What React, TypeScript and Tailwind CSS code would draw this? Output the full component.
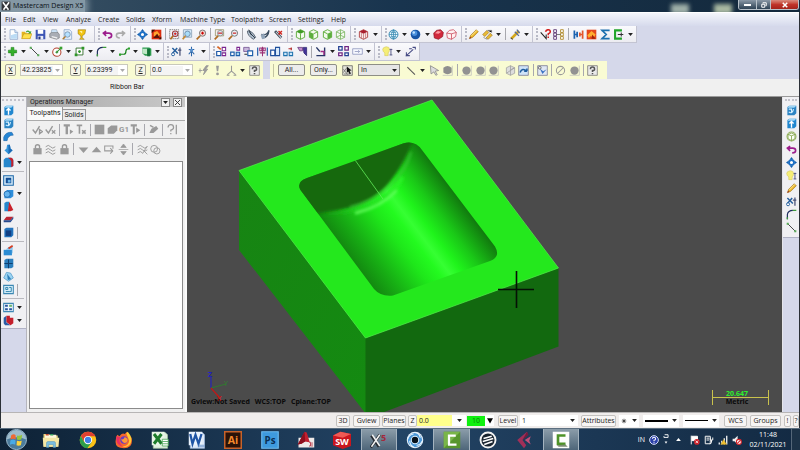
import type { ReactNode } from "react";

const icons: Record<string, ReactNode> = {
  file: <><path d="M3 1h7l4 4v10H3z" fill="#fff" stroke="#7d9cc4" /><path d="M4 9l9-3v8H4z" fill="#bcdcf5" /><path d="M10 1v4h4" fill="#dcebfa" stroke="#7d9cc4" /></>,
  open: <><path d="M1 14V4h5l1 2h7v8z" fill="#e3b51f" /><path d="M1 14l3-7h12l-3 7z" fill="#ffe14d" stroke="#b8860b" strokeWidth=".7" /><path d="M7 4q3-4 6 0l2-1-1 4-4-1 2-1q-2-2-4 0z" fill="#3aa335" /></>,
  save: <><path d="M1 1h13l1 1v13H1z" fill="#3d55b5" /><path d="M4 1h8v6H4z" fill="#fff" /><path d="M4 10h8v5H4z" fill="#e8ecf8" /><path d="M5 11h3v4H5z" fill="#26357c" /></>,
  print: <><path d="M4 1h7l2 6H3z" fill="#cfe6fa" stroke="#7a8ca0" strokeWidth=".7" /><path d="M1 7l3-2h9l2 3v5l-4 2-10-3z" fill="#a9adb5" stroke="#666" strokeWidth=".7" /><path d="M4 10l8 2v2l-8-2z" fill="#eee" /></>,
  preview: <><path d="M3 1h8l3 3v11H3z" fill="#e9f2fc" stroke="#7d9cc4" /><circle cx="8" cy="8" r="4" fill="#b5e0ff" stroke="#68829c" /><path d="M5 11l-4 4" stroke="#b07a2c" strokeWidth="2" /></>,
  cup: <><path d="M3 1h11l-1 6-4 3v3l3 2H5l2-2v-3L3 7z" fill="#f2c311" stroke="#8a6d00" strokeWidth=".7" /><path d="M5 3h4v4z" fill="#fff1a0" /></>,
  undo: <path d="M6 3L2 6l4 4M3 6h7q4 0 4 3.500T9 13" fill="none" stroke="#9b1c8c" strokeWidth="2.400" />,
  redo: <path d="M10 3l4 3-4 4M13 6H6q-4 0-4 3.500T7 13" fill="none" stroke="#aaa" strokeWidth="2.200" />,
  pan: <><path d="M8 0l3 4H5zM8 16l3-4H5zM0 8l4-3v6zM16 8l-4-3v6z" fill="#1560b0" /><circle cx="8" cy="8" r="3.500" fill="#fff" stroke="#1d70c5" strokeWidth="2.500" /></>,
  fit: <><path d="M1 1h14v14H1z" fill="#d92d0e" /><path d="M1 1h5L1 6zM15 11v4h-4z" fill="#3b1008" /><path d="M4 5l5-2 4 5-4 5-5-3z" fill="#ffa52e" /><path d="M3 13l6-6 4 6z" fill="#5b1408" /></>,
  zoomWin: <><path d="M1 1h13v13H1z" fill="none" stroke="#555" strokeDasharray="2 1" /><circle cx="9" cy="7" r="4" fill="#cfe9fb" stroke="#a03a3a" strokeWidth="1.500" /><path d="M9 5v4M7 7h4" stroke="#d11" strokeWidth="1.500" /><path d="M6 10l-4 5" stroke="#b06c22" strokeWidth="2.500" /></>,
  zoomFit: <><path d="M2 1h12v11H2z" fill="#d8ecfb" stroke="#7991aa" /><circle cx="8" cy="7" r="4" fill="#a8dcf8" stroke="#5a7390" /><path d="M5 10l-4 5" stroke="#c58b34" strokeWidth="2.500" /></>,
  zoomIn: <><circle cx="9.500" cy="6" r="4.500" fill="#f0d6d0" stroke="#666" strokeWidth="1.200" /><path d="M9.500 4v4M7.500 6h4" stroke="#c00" strokeWidth="1.500" /><path d="M6 10l-5 5" stroke="#b06c22" strokeWidth="2.500" /></>,
  zoomOut: <><circle cx="9.500" cy="6" r="4.500" fill="#e6f0f6" stroke="#666" strokeWidth="1.200" /><path d="M7 6h5" stroke="#c00" strokeWidth="1.500" /><path d="M6 10l-5 5" stroke="#b06c22" strokeWidth="2.500" /></>,
  zoomHalf: <><path d="M2 1h12v9H2z" fill="#f7eeee" stroke="#885" /><circle cx="9" cy="6" r="4" fill="#dce8ef" stroke="#777" /><path d="M6 6h6" stroke="#c00" strokeWidth="1.500" /><path d="M6 10l-5 5" stroke="#b06c22" strokeWidth="2.500" /></>,
  brush: <><path d="M2 3q6-2 12 9l-3 3Q2 10 2 3z" fill="#aebccc" stroke="#33404f" /><path d="M5 5l8 8M4 1l4 8" stroke="#222e3a" strokeWidth="1.300" /></>,
  brushUp: <><path d="M2 8q8 2 11-6M4 13q8-1 9-11" fill="none" stroke="#3b4c60" strokeWidth="2" /><path d="M1 9l5-3 2 7-5 2z" fill="#91a4b9" /></>,
  brushX: <><path d="M3 3l9 10" stroke="#33404f" strokeWidth="4" /><path d="M4 4l8 9" stroke="#d5dbe2" strokeWidth="1.500" /><path d="M8 3l5 5M13 3L8 8" stroke="#d1251f" strokeWidth="2" /></>,
  cubeTop: <><path d="M2 4l6-3 6 3v8l-6 3-6-3z" fill="#f3faee" stroke="#57a833" strokeWidth="1.300" /><path d="M2 4l6-3 6 3-6 3z" fill="#3f9a24" /><path d="M8 7v8" stroke="#57a833" strokeWidth="1.300" /></>,
  cubeLeft: <><path d="M2 4l6-3 6 3v8l-6 3-6-3z" fill="#f3faee" stroke="#57a833" strokeWidth="1.300" /><path d="M2 4l6 3v8l-6-3z" fill="#5cae3d" /><path d="M8 7l6-3" stroke="#57a833" strokeWidth="1.300" /></>,
  cubeRight: <><path d="M2 4l6-3 6 3v8l-6 3-6-3z" fill="#f3faee" stroke="#57a833" strokeWidth="1.300" /><path d="M14 4L8 7v8l6-3z" fill="#5cae3d" /><path d="M2 4l6 3" stroke="#57a833" strokeWidth="1.300" /></>,
  cubeIso: <path d="M2 4l6-3 6 3v8l-6 3-6-3zM2 4l6 3 6-3M8 7v8M2 12l6-3 6 3M8 1v8" fill="#f5faf1" stroke="#6eaf52" strokeWidth="1.100" />,
  table: <><path d="M2 4l6-3 6 3v8l-6 3-6-3z" fill="#f9e9e9" stroke="#a33" strokeWidth="1.200" /><path d="M2 4l6-3 6 3-6 3z" fill="#a91f2d" /><path d="M8 7v8M5 6v7M11 6v7" stroke="#b66" /></>,
  globe: <><circle cx="8" cy="8" r="6.500" fill="#eef8ff" stroke="#2e84ae" strokeWidth="1.300" /><path d="M1.500 8h13M8 1v14M3 4q5 3 10 0M3 12q5-3 10 0M8 1q-6 7 0 14M8 1q6 7 0 14" fill="none" stroke="#2e84ae" /></>,
  sphere: <><circle cx="8" cy="8" r="7" fill="#1754a5" /><circle cx="6.500" cy="6" r="4" fill="#4a90dc" /><circle cx="5.500" cy="5" r="1.800" fill="#bfe0ff" /></>,
  redBox: <><path d="M1 6l4-4 6-1 4 4-1 6-6 4-6-2z" fill="#d1293c" stroke="#8c1220" /><path d="M3 6l4-3 5 1-4 3z" fill="#ff9aa2" /></>,
  redWire: <path d="M1 6l4-4 6-1 4 4-1 6-6 4-6-2zM1 6l7 1 7-2M8 7v8" fill="#fff2f2" stroke="#c94456" strokeWidth="1.100" />,
  pencil: <><path d="M2 14l2-5 8-8 3 3-8 8z" fill="#eab529" stroke="#97660d" strokeWidth=".8" /><path d="M5 10l8-8" stroke="#fff0a0" strokeWidth="1.300" /><path d="M2 14l1-3 2 2z" fill="#932" /></>,
  pencils: <><path d="M1 8l6-6 3 3-6 6zM6 13l6-7 3 3-6 6z" fill="#e9bb36" stroke="#8c6514" strokeWidth=".8" /><path d="M8 2h6v3M2 12l5 3" stroke="#777" /></>,
  wand: <><path d="M2 14l11-11" stroke="#d6a91b" strokeWidth="4" /><path d="M7 4l6 6M10 1l4 5" stroke="#576b9f" strokeWidth="2" /><path d="M1 13l3 2" stroke="#444" strokeWidth="1.500" /></>,
  ask: <><path d="M1 5l8 9V8" fill="none" stroke="#222" strokeWidth="1.500" /><path d="M8 4q1-3 4-3t3 3q0 2-3 3v2M12 11v2" fill="none" stroke="#d22020" strokeWidth="2.200" /></>,
  grid6: <><path d="M1 1h4v4H1zM1 6h4v4H1zM1 11h4v4H1z" fill="#fff" stroke="#5b3674" strokeWidth="1.300" /><path d="M11 1h4v4h-4zM11 6h4v4h-4zM11 11h4v4h-4z" fill="#fff" stroke="#b08a2a" strokeWidth="1.300" /><path d="M5 8h6" stroke="#444" /></>,
  join: <><path d="M2 2v12M2 8h5M6 4v8" stroke="#1d63b0" strokeWidth="2.500" /><path d="M14 2v12M9 8h5M10 5v6" stroke="#e4572c" strokeWidth="2.500" /></>,
  flame: <><path d="M1 1h14v14H1z" fill="#e4461b" /><path d="M2 9l6-6 6 5-3 5-4-3-3 3z" fill="#ffae2e" /><path d="M9 8l5 6H8z" fill="#a32008" /></>,
  sigma: <path d="M14 2H3l6 6-6 6h11M2 2h12M2 14h12" fill="none" stroke="#1b6fae" strokeWidth="2.500" />,
  loop: <><path d="M13 2H3v12h10" fill="none" stroke="#21a52a" strokeWidth="3" /><path d="M7 8h8M12 5v6" stroke="#333" strokeWidth="1.500" /></>,
  plus: <path d="M6 2h4v4h4v4h-4v4H6v-4H2V6h4z" fill="#35b02a" stroke="#147a12" strokeWidth=".8" />,
  line: <><path d="M2 2l12 12" stroke="#333" strokeWidth="1.300" /><path d="M1 1h3v3H1zM12 12h3v3h-3z" fill="#57a957" /></>,
  circle: <><circle cx="7" cy="9" r="6" fill="#fff" stroke="#b54332" strokeWidth="1.500" /><path d="M7 9l5-5M5 9h4M7 7v4" stroke="#2c8d2c" strokeWidth="1.500" /><path d="M11 1h4v4h-4z" fill="#38a12e" /></>,
  rect: <><path d="M3 3h10v10H3z" fill="#fff" stroke="#2f6b2a" strokeWidth="1.300" /><path d="M1 11h4v4H1zM11 1h4v4h-4zM6 7h4v2H6zM7 6h2v4H7z" fill="#2e9628" /></>,
  fillet: <><path d="M2 15V8q1-6 8-6" fill="none" stroke="#1e2c5c" strokeWidth="1.700" /><path d="M10 2h5M2 15v-3" stroke="#3d9c3a" strokeWidth="2" /></>,
  spline: <><path d="M2 12h5q3 0 3-4t4-4" fill="none" stroke="#18841c" strokeWidth="1.800" /><path d="M0 11h3v3H0zM13 2h3v3h-3z" fill="#2aa32a" /></>,
  drum: <><path d="M2 2h10l3 2v10H6l-4-3z" fill="#2f9c50" /><path d="M2 4h7v8l-7-1z" fill="#bfe8c6" /><path d="M9 4h4v11H9z" fill="#137136" /></>,
  trim: <><path d="M2 3l8 8M2 11l7-8" stroke="#27609e" strokeWidth="2.200" /><circle cx="3" cy="12" r="2.200" fill="#fff" stroke="#27609e" strokeWidth="1.400" /><path d="M13 2v12M10 6h5" stroke="#474f75" strokeWidth="1.800" /></>,
  axis: <><path d="M8 1v14M4 5h8M4 12l4-5 4 5" fill="none" stroke="#2a64a8" strokeWidth="1.500" /><circle cx="8" cy="6" r="2.200" fill="#5b93cf" /></>,
  xfMove: <><path d="M1 8h6v6H1z" fill="#fff" stroke="#2159a8" strokeWidth="1.700" /><path d="M9 2h5v5H9zM9 10h5v4H9z" fill="#fff" stroke="#7b2590" strokeWidth="1.500" /><path d="M2 1l5 4" stroke="#d66322" strokeWidth="2.500" /></>,
  xfRotate: <><path d="M1 9h5v5H1z" fill="#fff" stroke="#1f5faa" strokeWidth="1.700" /><path d="M9 9h5v5H9z" fill="#a7d4ee" stroke="#1f5faa" strokeWidth="1.500" /><path d="M10 2h4v4h-4z" fill="#fff" stroke="#7b2590" strokeWidth="1.500" /></>,
  xfCopy: <><path d="M1 2h8v6H1z" fill="#c8b6dc" stroke="#634086" /><path d="M7 7h7v7H7z" fill="#fff" stroke="#1f5faa" strokeWidth="1.700" /><path d="M2 12h4" stroke="#333" strokeWidth="1.500" /></>,
  xfMirror: <><path d="M1 2v12M15 2v12" stroke="#2159a8" strokeWidth="1.700" /><path d="M4 3h3v4H4zM4 10h8M9 3h3v4H9zM8 1v14" fill="none" stroke="#9a2f75" strokeWidth="1.500" /></>,
  xfScale: <><path d="M1 6h6v8H1z" fill="#fff" stroke="#1f4f9c" strokeWidth="1.700" /><path d="M8 2h6v12H8z" fill="#d9eafa" stroke="#1f4f9c" strokeWidth="1.500" /></>,
  xfOffset: <><path d="M1 9h5v5H1zM9 9h5v5H9z" fill="#cfe8fa" stroke="#1e72ad" strokeWidth="1.500" /><path d="M8 4h5M12 2v4" stroke="#b22a2a" strokeWidth="1.700" /></>,
  xfProject: <><path d="M1 2h7v5H4z" fill="#c08bcd" stroke="#55246e" /><path d="M9 2h5v12l-4-4z" fill="#44339a" stroke="#251b68" /></>,
  nest: <><path d="M2 2l5 6M2 14h12V2" fill="none" stroke="#273565" strokeWidth="2" /><path d="M8 8h5v5" fill="none" stroke="#a32f86" strokeWidth="2" /></>,
  quad: <><path d="M1 1h5v5H1zM10 10h5v4h-5z" fill="#fff" stroke="#233f93" strokeWidth="1.800" /><path d="M10 1h5v5h-5zM1 10h5v4H1z" fill="#fff" stroke="#6f2682" strokeWidth="1.800" /></>,
  dragBox: <path d="M1 4h14v8H1zM4 8h7M9 6l2 2-2 2" fill="#f7f8ff" stroke="#8790b9" strokeWidth="1.100" />,
  bulb: <><path d="M6 1q5 0 5 4 0 3-2 5v4H4v-4Q1 8 1 5t5-4z" fill="#f5ee77" stroke="#d3c65a" strokeWidth=".8" /><path d="M13 4v9M11 5h4M11 13h4" stroke="#555a86" strokeWidth="1.400" /></>,
  dim: <><path d="M1 14h6M2 9v5l10-9M6 4h4M11 2h4v3" fill="none" stroke="#454a83" strokeWidth="1.500" /></>,
  flash: <path d="M1 8h5M3 5v6M12 1L7 8h3l-2 6 6-8h-3l4-5z" fill="#9a9a9a" stroke="#9a9a9a" strokeWidth="1.300" />,
  bang: <><path d="M6 1h4L9 9H7z" fill="#999" /><circle cx="8" cy="13" r="2" fill="#999" /></>,
  tripod: <path d="M8 1v8M8 9l-6 5M8 9l6 5M1 15h4M11 15h4" fill="none" stroke="#999" strokeWidth="1.500" />,
  help: <><path d="M1 1h14v14H1z" fill="#eaeaea" stroke="#666" /><path d="M5 6q0-3 3-3t3 3q0 2-3 2v2M8 11.500v2" fill="none" stroke="#555" strokeWidth="2.200" /></>,
  pick: <><path d="M1 1h14v14H1z" fill="#e4e4da" stroke="#555" /><path d="M7 2l7 6-3 .5 2 4-2 1-2-4-2 2z" fill="#111" /><path d="M2 6l6 8M2 11l5-7M3 13h8" stroke="#666" /></>,
  seg: <path d="M2 3l11 11" stroke="#555" strokeWidth="1.500" />,
  pointer: <path d="M2 1l12 7-5 1 3 5-2 1-3-5-4 3z" fill="#ddd" stroke="#8b8b8b" strokeWidth="1.200" />,
  blob: <><path d="M15 1v14H1" fill="none" stroke="#bbb" /><path d="M2 4q6-5 12 0v7q-6 5-12 0z" fill="#8e8e8e" /></>,
  ball: <><path d="M15 1v14H1" fill="none" stroke="#bbb" /><circle cx="8" cy="8" r="6" fill="#929292" /></>,
  halfCube: <><path d="M2 4l6-3 6 3v8l-6 3-6-3z" fill="#ddd" stroke="#999" /><path d="M8 1v14M8 7l6-3M2 12L14 4" stroke="#999" /></>,
  swoop: <><path d="M1 1h14v14H1z" fill="#cfe3f8" stroke="#668" /><path d="M3 11q3-8 10-2M13 9V5M13 9H9" fill="none" stroke="#1f5d9e" strokeWidth="2.200" /></>,
  verify: <><path d="M1 1h14v14H1z" fill="#dfe7f4" stroke="#668" /><path d="M4 5l4 8 6-7-5 3z" fill="#3c74c4" /><circle cx="4" cy="4" r="2" fill="#eee" stroke="#444" /></>,
  ban: <><circle cx="8" cy="8" r="6" fill="none" stroke="#9a9a9a" strokeWidth="1.500" /><path d="M4 12l8-8" stroke="#9a9a9a" strokeWidth="1.500" /></>,
  check: <path d="M1 8l4 5 6-10M11 8v6l4-3z" fill="none" stroke="#999" strokeWidth="2" />,
  checkX: <path d="M1 8l4 5 6-10M10 9l5 5M15 9l-5 5" fill="none" stroke="#999" strokeWidth="2" />,
  regen: <><path d="M1 2h9M5.500 2v13" stroke="#999" strokeWidth="3.500" /><path d="M10 8l5 3-5 4z" fill="#999" /></>,
  regenX: <path d="M1 2h8M5 2v12M9 9l5 5M14 9l-5 5" fill="none" stroke="#999" strokeWidth="2.300" />,
  square: <path d="M1 1h14v14H1z" fill="#999" />,
  stock: <path d="M1 6l5-4h9v7l-5 5H1z" fill="#999" />,
  post: <><path d="M1 2h9M5.500 2v13" stroke="#999" strokeWidth="3" /><path d="M9 5l6 4-6 4z" fill="#999" /></>,
  feed: <><path d="M2 13l3-6 7-4 3 4-7 6z" fill="#999" /><path d="M3 2l5 3" stroke="#999" strokeWidth="2" /></>,
  qmark: <path d="M3 5q0-4 4-4t4 4q0 3-4 4v2M7 13v2M15 1v14" fill="none" stroke="#999" strokeWidth="1.800" />,
  lock: <><path d="M2 6h12v9H2z" fill="#999" /><path d="M5 7V4q0-3 3-3t3 3v3" fill="none" stroke="#999" strokeWidth="2" /></>,
  waves: <path d="M1 4q4-4 7 0t7 0M1 8.500q4-4 7 0t7 0M1 13q4-4 7 0t7 0" fill="none" stroke="#999" strokeWidth="1.400" />,
  down: <path d="M1 5h14l-7 8z" fill="#999" />,
  up: <path d="M1 12h14L8 4z" fill="#999" />,
  enter: <path d="M1 2v8h12M13 10l-4-4M13 10l-4 4M1 3h12v4" fill="none" stroke="#999" strokeWidth="1.500" />,
  updown: <path d="M8 0l4 5H4zM8 16l4-5H4zM1 8h14" fill="#999" stroke="#999" />,
  rings: <><circle cx="6" cy="7" r="5" fill="none" stroke="#999" strokeWidth="1.300" /><circle cx="10" cy="10" r="4.500" fill="none" stroke="#999" strokeWidth="1.300" /></>,
  wavesX: <path d="M1 4q4-4 7 0t7 0M1 8.500q4-4 7 0t7 0M1 13q4-4 7 0M10 10l5 5M15 3l-7 11" fill="none" stroke="#999" strokeWidth="1.300" />,
  extrude: <><path d="M2 3l3-2h10v11l-3 3H2z" fill="#2187cf" /><path d="M5 1h10l-3 3H2z" fill="#9fd5f5" /><path d="M8 5v9M5 8l3-3 3 3" fill="none" stroke="#fff" strokeWidth="2" /></>,
  revolve: <><path d="M2 3l3-2h10v11l-3 3H2z" fill="#2b84c4" /><path d="M5 1h10l-3 3H2z" fill="#9fd5f5" /><path d="M4 10q5 4 7-4M4 6h4v5" fill="none" stroke="#d4efff" strokeWidth="1.600" /></>,
  sweep: <path d="M1 14V9q3-8 12-7l2 4q-8 0-9 8z" fill="#2585d5" stroke="#12599e" strokeWidth=".7" />,
  loft: <><path d="M6 1h4l1 6 3 2-6 6-6-6 3-2z" fill="#3596dc" /><path d="M8 1h2l1 6 3 2-6 6z" fill="#1a69b4" /></>,
  filletSolid: <><path d="M1 4l3-3h8l3 3v9l-3 2H1z" fill="#2687cd" /><path d="M7 1h5q3 1 3 4v8l-3 2V6q-1-3-5-5z" fill="#c5202b" /></>,
  shell: <><path d="M1 1h14v14H1z" fill="#d2e9f9" stroke="#1d67a8" strokeWidth="1.500" /><path d="M4 4h8v8H4z" fill="#134c94" /><path d="M7 7h4v4H7z" fill="#6fb9ec" /></>,
  bool: <><path d="M2 6l4-3h9v9l-4 3H2z" fill="#2d8ddb" /><circle cx="6" cy="9" r="4.500" fill="#65b4ef" stroke="#155b9c" /></>,
  draft: <><path d="M2 15V3l3-2h4l-1 14z" fill="#2687cd" /><path d="M9 1l6 12-4 2H7z" fill="#c9202b" /></>,
  plate: <><path d="M1 9l4-5h10l-4 5z" fill="#bb2633" /><path d="M1 9h10l4-5v3l-4 5H1z" fill="#254a90" /></>,
  solid: <><path d="M2 3l3-2h10v11l-3 3H2z" fill="#2273bd" /><path d="M4 5h8v8H4z" fill="#123f83" /></>,
  trimSolid: <><path d="M1 7h12v8H1z" fill="#2b8cd4" /><path d="M4 7l4-4h6v8l-1 2V7z" fill="#81c2ee" /><path d="M8 5l6-4" stroke="#d43b1f" strokeWidth="2.500" /></>,
  windows: <><path d="M2 3l3-2h10v12l-3 2H2z" fill="#2b7ebd" /><path d="M2 8h12M8 2v13" stroke="#0f3f70" strokeWidth="1.500" /></>,
  crystal: <><path d="M5 2l6 1 4 7-7 5-7-5z" fill="#9bd3f2" stroke="#4995c4" /><path d="M6 4l6 8-5 1z" fill="#2c7eb9" /></>,
  sheet: <><path d="M1 2h14v12H1z" fill="#d5edf8" stroke="#3d88b3" strokeWidth="1.500" /><path d="M4 5h3v3H4zM9 5h3v6H9M4 11h5" fill="none" stroke="#257da9" strokeWidth="1.300" /></>,
  layout: <><path d="M1 2h14v12H1z" fill="#eef7fe" stroke="#3f87b4" strokeWidth="1.500" /><path d="M3 4h4v3H3zM3 9h4v3H3zM9 9h4v3H9z" fill="#28539e" /><path d="M9 4h4v3H9z" fill="#6cb46b" /></>,
  cutter: <><path d="M1 4l4-3v10l6 4H3l-2-3z" fill="#2c5da6" /><path d="M5 1h5v3h5v8l-4 3-6-5z" fill="#c41f2c" /></>,
  wheel: <><circle cx="8" cy="8" r="6.500" fill="#fbfff5" stroke="#8fae58" strokeWidth="1.500" /><path d="M3 5l5-2 5 2-5 2zM8 7v7M3 5v6l5 3 5-3V5" fill="none" stroke="#83a44e" strokeWidth="1.200" /></>,
};

function Tool({ name }: { name: string }) {
  return (
    <button type="button" aria-label={name} className="flex h-[13px] w-[13px] shrink-0 items-center justify-center">
      <svg viewBox="0 0 16 16" className="h-[11px] w-[11px]">{icons[name]}</svg>
    </button>
  );
}

function Caret() {
  return (
    <svg viewBox="0 0 8 5" aria-hidden="true" className="h-[3px] w-[5px] shrink-0">
      <path d="M0 0h8L4 5z" fill="#222" />
    </svg>
  );
}

// "v" is a drop-down arrow, "|" a divider, anything else an icon name
function Tools({ items }: { items: string }) {
  return items.split(" ").map((item, i) => {
    if (item === "v") return <span key={i} className="flex w-[9px] justify-center"><Caret /></span>;
    if (item === "|") return <span key={i} className="mx-[2px] h-[12px] w-px shrink-0 bg-[#a8a8ae]" />;
    return <Tool key={i} name={item} />;
  });
}

function Group({ items, className }: { items: string; className: string }) {
  return (
    <div className={`flex items-center justify-between border-r border-b border-[#c3c4d2] bg-linear-to-b from-[#fafafd] to-[#ececf1] pl-[3px] ${className}`}>
      <span className="h-[12px] border-l-2 border-dotted border-[#b9bac6]" />
      <Tools items={items} />
    </div>
  );
}

const menus = [
  ["File", "w-[18px]"], ["Edit", "w-[20px]"], ["View", "w-[23px]"], ["Analyze", "w-[32px]"],
  ["Create", "w-[28px]"], ["Solids", "w-[26px]"], ["Xform", "w-[28px]"], ["Machine Type", "w-[51px]"],
  ["Toolpaths", "w-[38px]"], ["Screen", "w-[29px]"], ["Settings", "w-[33px]"], ["Help", "w-[20px]"],
];

function TitleBar() {
  return (
    <header className="relative flex h-[12px] items-center overflow-hidden bg-linear-to-r from-[#3a5264] via-[#18344e] to-[#14293c]">
      <span className="absolute top-[4px] right-[111px] h-[10px] w-[18px] bg-[#9fb0a8] blur-[2px]" />
      <span className="absolute top-[4px] right-[68px] h-[10px] w-[18px] bg-[#a9b9a2] blur-[2px]" />
      <div className="flex h-full items-center gap-[2px] bg-[#8498a5] pr-[2px] pl-px shadow-[0_0_6px_3px_#7d909d]">
        <svg viewBox="0 0 16 16" className="h-[10px] w-[10px]">
          <path d="M1 1h14v14H1z" fill="#33363a" />
          <path d="M3 2l9 12M13 2L4 14" stroke="#fff" strokeWidth="2.500" />
        </svg>
        <h1 className="text-[7px] leading-[12px] whitespace-nowrap text-[#0a0f14]">Mastercam Design X5</h1>
      </div>
      <div className="relative mr-px ml-auto flex h-[10px] self-start overflow-hidden rounded-b-[3px] border border-t-0 border-[#b9c2ca]">
        <button type="button" aria-label="Minimize" className="flex w-[18px] items-center justify-center border-r border-[#b9c2ca] bg-linear-to-b from-[#8a98a6] to-[#2f4355]">
          <span className="h-[2px] w-[7px] bg-white" />
        </button>
        <button type="button" aria-label="Restore" className="flex w-[14px] items-center justify-center border-r border-[#b9c2ca] bg-linear-to-b from-[#8a98a6] to-[#2f4355]">
          <svg viewBox="0 0 8 8" className="h-[6px] w-[6px]"><path d="M2.500 2V1H7v4H6M1 3h4v4H1z" fill="none" stroke="#fff" strokeWidth="1.300" /></svg>
        </button>
        <button type="button" aria-label="Close" className="flex w-[27px] items-center justify-center bg-linear-to-b from-[#d88a7e] via-[#c0342a] to-[#a3231b]">
          <svg viewBox="0 0 8 8" className="h-[6px] w-[6px]"><path d="M1 1l6 6M7 1L1 7" stroke="#fff" strokeWidth="2" /></svg>
        </button>
      </div>
    </header>
  );
}

function Coord({ axis, value, className }: { axis: string; value: string; className: string }) {
  return (
    <div className={`flex items-center justify-between ${className}`}>
      <button type="button" className="h-[12px] w-[11px] rounded-[2px] border border-[#a5a598] bg-[#f5f5e8] text-[7px] leading-[9px] underline">{axis}</button>
      <div className="flex h-[12px] w-[43px] items-center border border-[#c9c9bb] bg-white pr-[2px]">
        <input aria-label={axis} defaultValue={value} className="w-full min-w-0 bg-[#f4f4f4] pl-px text-[7px] leading-[9px] outline-none" />
        <svg viewBox="0 0 8 5" className="ml-[2px] h-[3px] w-[5px] shrink-0"><path d="M0 0h8L4 5z" fill="#aaa" /></svg>
      </div>
    </div>
  );
}

function YellowBar() {
  return (
    <div className="flex h-[18px] font-['Roboto','Liberation_Sans',sans-serif]">
      <div className="flex w-[262px] items-center bg-[#f9fbd3] pl-[4px]">
        <Coord axis="X" value="42.23825" className="mr-[7px] w-[58px]" />
        <Coord axis="Y" value="6.23399" className="mr-[7px] w-[58px]" />
        <Coord axis="Z" value="0.0" className="mr-[4px] w-[58px]" />
        <div className="flex w-[64px] items-center justify-between">
          <Tools items="flash bang tripod v help" />
        </div>
      </div>
      <div className="ml-[7px] flex w-[337px] items-center bg-[#f9fbd3] pl-[3px]">
        <span className="mr-[4px] h-[13px] w-px bg-[#c4c5a2]" />
        <button type="button" className="mr-[5px] h-[12px] w-[27px] rounded-[2px] border border-[#8e8e86] bg-[#ececec] text-[7px] leading-[9px]">All...</button>
        <button type="button" className="mr-[4px] h-[12px] w-[27px] rounded-[2px] border border-[#8e8e86] bg-[#ececec] text-[7px] leading-[9px]">Only...</button>
        <Tool name="pick" />
        <div className="relative ml-[4px] flex items-center">
          <select aria-label="Selection mode" className="h-[12px] w-[42px] appearance-none border border-[#8e8e86] bg-[#e6e6e6] pl-[2px] text-[7px] leading-[9px]">
            <option>In</option>
            <option>Out</option>
          </select>
          <span className="pointer-events-none absolute right-[3px]"><Caret /></span>
        </div>
        <div className="ml-[5px] flex w-[95px] items-center justify-between">
          <Tools items="seg v pointer blob | ball ball ball" />
        </div>
        <div className="ml-[4px] flex w-[95px] items-center justify-between">
          <Tools items="halfCube swoop | verify | ban ball | help" />
        </div>
      </div>
    </div>
  );
}

function LeftDock() {
  const rows = ["extrude", "revolve", "sweep", "loft", "filletSolid v", "-", "shell", "bool v", "draft", "plate", "solid |", "-", "trimSolid", "windows", "crystal", "sheet |", "-", "layout v", "cutter v"];
  return (
    <aside className="w-[26px] shrink-0 border-r border-[#b5b5bd] bg-[#d5d8ea]">
      <div className="border-b border-[#b0b2c5] bg-[#f0f0f3] pt-[2px] pb-px pl-px">
        <div className="mr-[2px] mb-[3px] border-t-2 border-dotted border-[#c2c2ca]" />
        {rows.map((row, i) =>
          row === "-" ? (
            <div key={i} className="my-[2px] mr-[2px] border-t border-[#b9b9bf]" />
          ) : (
            <div key={i} className="flex items-center"><Tools items={row} /></div>
          )
        )}
      </div>
    </aside>
  );
}

function RightDock() {
  const rows = ["revolve", "extrude", "wheel", "undo", "pan", "bulb", "pencil", "trim", "fillet", "line"];
  return (
    <aside className="w-[17px] shrink-0 border-l border-[#e5e5ea] bg-[#d5d8ea]">
      <div className="border-b border-[#b0b2c5] bg-[#f0f0f3] pt-[2px] pb-[3px] pl-[2px]">
        <div className="mr-[2px] mb-[3px] border-t-2 border-dotted border-[#c2c2ca]" />
        {rows.map((row) => <Tool key={row} name={row} />)}
      </div>
    </aside>
  );
}

function OperationsManager() {
  return (
    <section className="flex w-[160px] shrink-0 flex-col border-r-2 border-[#fafafa] bg-[#f0f0f0] font-['Roboto','Liberation_Sans',sans-serif]">
      <div className="flex h-[10px] items-center bg-linear-to-r from-[#a9a9a9] to-[#c9c9c9] pl-[3px]">
        <h2 className="text-[7px] leading-[10px] whitespace-nowrap text-[#222]">Operations Manager</h2>
        <button type="button" aria-label="Panel menu" className="mr-[3px] ml-auto flex h-[9px] w-[9px] items-center justify-center border border-[#888] bg-[#f2f2f2]"><Caret /></button>
        <button type="button" aria-label="Close panel" className="mr-[3px] flex h-[9px] w-[9px] items-center justify-center border border-[#888] bg-[#f2f2f2]">
          <svg viewBox="0 0 8 8" className="h-[5px] w-[5px]"><path d="M0 0l8 8M8 0L0 8" stroke="#333" strokeWidth="1.500" /></svg>
        </button>
      </div>
      <div className="flex h-[14px] items-end border-b border-[#ababab] pt-px pl-px">
        <button type="button" className="h-[13px] w-[35px] border-r border-[#999] bg-[#fafafa] text-[7px] leading-[11px]">Toolpaths</button>
        <button type="button" className="h-[11px] w-[23px] border-t border-r border-[#999] bg-[#ebebeb] text-[7px] leading-[10px]">Solids</button>
      </div>
      <div className="flex h-[18px] items-center justify-between border-b border-[#b3b3b3] pr-[7px] pl-[4px]">
        <Tools items="check checkX | regen regenX | square stock" />
        <button type="button" className="w-[13px] text-[8px] leading-[10px] font-bold text-[#999]">G1</button>
        <Tools items="post | feed | qmark" />
      </div>
      <div className="flex h-[20px] w-[135px] items-center justify-between pl-[4px]">
        <Tools items="lock waves lock | down up enter updown | wavesX rings" />
      </div>
      <div className="mx-[2px] mt-[2px] mb-[3px] flex-1 border border-[#8b8b8b] bg-white" />
    </section>
  );
}

function Viewport() {
  return (
    <main className="relative min-w-0 flex-1 overflow-hidden bg-[#4b4b4b]">
      <svg viewBox="187 97 595 315" preserveAspectRatio="xMidYMid slice" className="absolute inset-0 h-full w-full">
        <defs>
          <linearGradient id="bore" gradientUnits="userSpaceOnUse" x1="337" y1="239" x2="434" y2="166">
            <stop offset="0" stopColor="#138a10" />
            <stop offset=".15" stopColor="#17ad14" />
            <stop offset=".38" stopColor="#1ee71a" />
            <stop offset=".5" stopColor="#23fa1f" />
            <stop offset=".57" stopColor="#36ff33" />
            <stop offset=".66" stopColor="#1ff41b" />
            <stop offset=".8" stopColor="#1ac817" />
            <stop offset="1" stopColor="#117a0e" />
          </linearGradient>
          <linearGradient id="side" x1="0" y1="0" x2="1" y2="1">
            <stop offset="0" stopColor="#178413" />
            <stop offset="1" stopColor="#148a11" />
          </linearGradient>
          <linearGradient id="rim" gradientUnits="userSpaceOnUse" x1="318" y1="216" x2="398" y2="190">
            <stop offset="0" stopColor="#169512" stopOpacity="0" />
            <stop offset=".5" stopColor="#22d91e" />
            <stop offset="1" stopColor="#2bf227" />
          </linearGradient>
          <clipPath id="pocket">
            <path d="M307 178L403 143.500Q415 140 422 150L495 246.500Q501 257 490 261L393 295.500Q381 297 374 289L300.500 190Q296 182 307 178z" />
          </clipPath>
          <filter id="soft" x="-20%" y="-20%" width="140%" height="140%"><feGaussianBlur stdDeviation="1.800" /></filter>
        </defs>
        <path d="M239 170.500L366 338v76L239 250z" fill="url(#side)" />
        <path d="M365.500 338L558.500 268v78.500L365.500 419z" fill="#12690f" />
        <path d="M239 170.500L432 100l126.500 168-193 70z" fill="#24e81d" />
        <path d="M239 170.500L432 100l126.500 168" fill="none" stroke="#5bf553" strokeWidth=".6" />
        <path d="M239 170.500l126.500 167.500 193-70" fill="none" stroke="#4df545" strokeWidth=".7" />
        <g clipPath="url(#pocket)">
          <path d="M290 130h220v175H290z" fill="url(#bore)" />
          <path d="M290 216Q325 214 350 207.500T390 182 414 138L290 120z" fill="#12690f" filter="url(#soft)" />
          <path d="M322 214Q350 213 372 204T402 177" fill="none" stroke="url(#rim)" strokeWidth="4" filter="url(#soft)" />
          <path d="M350 207Q374 201 390 186T411 152" fill="none" stroke="#3fc43b" strokeWidth="1.500" filter="url(#soft)" />
          <path d="M356 213Q381 207 396 191" fill="none" stroke="#66ff60" strokeWidth="2.500" strokeLinecap="round" filter="url(#soft)" />
          <path d="M355 160l28 39" stroke="#63ec5b" strokeWidth=".8" />
        </g>
        <path d="M498 289.500h36M516.500 271v37" stroke="#061006" strokeWidth="1.600" />
        <path d="M211 388v-11" stroke="#2525b5" strokeWidth="1.200" />
        <path d="M211 388l15-4" stroke="#2f7a2f" />
        <path d="M211 388l8 9" stroke="#c01818" strokeWidth="1.200" />
        <g fontSize="7">
          <text x="208" y="377" fill="#2020c0" fontWeight="bold">Z</text>
          <text x="224" y="386" fill="#2d862d">Y</text>
          <text x="217" y="401" fill="#d01414" fontWeight="bold">X</text>
        </g>
      </svg>
      <p className="absolute bottom-[5px] left-[4px] flex gap-[5px] text-[7px] leading-[10px] font-bold whitespace-nowrap text-[#0a0a0a]">
        <span>Gview:Not Saved</span>
        <span>WCS:TOP</span>
        <span>Cplane:TOP</span>
      </p>
      <div className="absolute right-[13px] bottom-[7px] w-[57px] border-x border-[#c9c24c] pr-[7px] text-center text-[7px] leading-[7px] font-bold">
        <p className="text-[#2df02d]">20.647</p>
        <p className="-mr-[7px] border-t border-[#c9c24c] pr-[7px] text-[#0a0a0a]">Metric</p>
      </div>
    </main>
  );
}

const cell = "h-[12px] shrink-0 rounded-[2px] border border-[#c3c1bf] bg-[#f7f5f4] text-center text-[7px] leading-[10px] whitespace-nowrap";

function LineStyle({ weight, label }: { weight: string; label: string }) {
  return (
    <button type="button" aria-label={label} className="flex h-[12px] w-[36px] shrink-0 items-center justify-between bg-white px-[2px]">
      <span className={`w-[23px] border-black ${weight}`} />
      <Caret />
    </button>
  );
}

function StatusBar() {
  return (
    <footer className="flex h-[16px] items-center justify-end overflow-hidden border-t border-[#b7b5b5] bg-[#f0edec] text-[#222]">
      <button type="button" className={`${cell} mr-[3px] w-[14px]`}>3D</button>
      <button type="button" className={`${cell} mr-[2px] w-[27px]`}>Gview</button>
      <button type="button" className={`${cell} mr-[2px] w-[24px]`}>Planes</button>
      <button type="button" className={`${cell} w-[9px]`}>Z</button>
      <input aria-label="Z depth" defaultValue="0.0" className="h-[11px] w-[35px] shrink-0 bg-[#ffff8c] pl-[2px] text-[7px] leading-[10px] outline-none" />
      <span className="flex h-[11px] w-[14px] shrink-0 items-center justify-center bg-white"><Caret /></span>
      <button type="button" className="ml-px h-[10px] w-[18px] shrink-0 bg-[#10f010] text-[7px] leading-[10px] text-[#0a7a0a]">10</button>
      <span className="mr-[4px] flex h-[11px] w-[9px] shrink-0 items-center justify-center bg-white">
        <svg viewBox="0 0 8 8" className="h-[7px] w-[6px]"><path d="M0 1h8L4 8z" /></svg>
      </span>
      <button type="button" className={`${cell} mr-[2px] w-[20px]`}>Level</button>
      <input aria-label="Level" defaultValue="1" className="h-[11px] w-[46px] shrink-0 bg-white pl-[2px] text-[7px] leading-[10px] outline-none" />
      <span className="mr-[3px] flex h-[11px] w-[12px] shrink-0 items-center justify-center bg-white"><Caret /></span>
      <button type="button" className={`${cell} mr-[3px] w-[35px]`}>Attributes</button>
      <button type="button" aria-label="Point style" className="mr-[4px] flex h-[12px] w-[20px] shrink-0 items-center justify-between bg-white px-[2px]">
        <svg viewBox="0 0 8 8" className="h-[6px] w-[6px]"><path d="M4 1v6M1 4h6M2 2l4 4M6 2L2 6" stroke="#333" /></svg>
        <Caret />
      </button>
      <LineStyle weight="border-t-2" label="Line style" />
      <span className="w-[4px] shrink-0" />
      <LineStyle weight="border-t" label="Line width" />
      <button type="button" className={`${cell} ml-[5px] w-[23px]`}>WCS</button>
      <button type="button" className={`${cell} ml-[3px] w-[31px]`}>Groups</button>
      <button type="button" aria-label="Alerts" className={`${cell} ml-[3px] w-[7px]`}>!</button>
      <button type="button" aria-label="Help" className={`${cell} ml-[2px] w-[6px]`}>?</button>
    </footer>
  );
}

const apps: [string, boolean, ReactNode][] = [
  ["Explorer", false, <><path d="M2 4h7l2 2h10v15H2z" fill="#e8d27d" /><path d="M4 5h15v5H4z" fill="#fff8dc" /><path d="M5 4h4v2H5z" fill="#c34b32" /><path d="M11 4h4v2h-4z" fill="#37a15c" /><path d="M1 9h22l-1 12H2z" fill="#f5e7a5" /><path d="M6 22v-6q0-2 2-2h8q2 0 2 2v6h-3v-4H9v4z" fill="#79bde0" stroke="#4b8fb5" strokeWidth=".6" /></>],
  ["Chrome", false, <><circle cx="12" cy="12" r="11" fill="#fbc116" /><path d="M2.500 6.500A11 11 0 0122 7H12l-5 8z" fill="#df4032" /><path d="M2.500 6.500A11 11 0 0011 23l6-8H7z" fill="#2c9f4b" /><circle cx="12" cy="12" r="5.500" fill="#fff" /><circle cx="12" cy="12" r="4.200" fill="#3f7fe8" /></>],
  ["Firefox", false, <><path d="M3 5l3 2q3-5 7-3l3-3q3 5 6 8 3 14-10 14T1 12q0-4 2-7z" fill="#f5672c" /><path d="M15 3l2-2q7 8 4 15-4 7-11 5 8-1 9-8z" fill="#ffcb35" /><path d="M2 7q-2 11 8 14Q4 15 7 8z" fill="#e82d65" /><circle cx="12" cy="12" r="5" fill="#6a3bc4" /><path d="M8 11q4 1 5-3 6 2 3 7-5 3-8-4z" fill="#ff9a36" /></>],
  ["Excel", false, <><path d="M3 2h16l3 3v18H3z" fill="#e1f0df" stroke="#9fc09d" /><path d="M1 1h17v18H1z" fill="#e9f6e7" /><path d="M4 4l10 13M14 4L4 17" stroke="#1e7d2c" strokeWidth="4" /><path d="M15 11h8v9h-8zM15 14h8M15 17h8" fill="#fff" stroke="#3b9c48" /></>],
  ["Word", false, <><path d="M3 2h16l3 3v18H3z" fill="#dfeaf8" stroke="#9db7db" /><path d="M1 1h18v18H1z" fill="#eaf3fd" /><path d="M3 4l3 13 4-12 4 12 4-13" fill="none" stroke="#1f55a5" strokeWidth="3" /><path d="M13 19h9M13 21h9" stroke="#5f8bc6" /></>],
  ["Illustrator", false, <><path d="M1 1h22v22H1z" fill="#2a1208" stroke="#c7622a" strokeWidth="2" /><text x="12" y="17" textAnchor="middle" fontSize="14" fontWeight="bold" fill="#f58a2c">Ai</text></>],
  ["Photoshop", false, <><path d="M1 1h22v22H1z" fill="#3e9ade" stroke="#6dbbef" strokeWidth="1.500" /><text x="12" y="17" textAnchor="middle" fontSize="13" fontWeight="bold" fill="#0b2f55">Ps</text></>],
  ["AutoCAD", false, <><path d="M2 9h21v13H2z" fill="#eee9e8" /><path d="M1 18L10 1l3 1 4 13-7-1-4 3z" fill="#c21f30" /><path d="M10 1l1 13-5 3-5 1z" fill="#8c0f1e" /><path d="M16 15h2v5h-2M20 15v6" fill="none" stroke="#b45" strokeWidth="1.300" /></>],
  ["SolidWorks", false, <><path d="M0 6l10-5 14 3v16l-11 4L0 19z" fill="#c9161e" /><path d="M0 6l10-5 14 3-11 5z" fill="#ee5a55" /><text x="12" y="19" textAnchor="middle" fontSize="12" fontWeight="bold" fill="#fff">SW</text></>],
  ["Mastercam", true, <><path d="M2 6l10 15M13 5L1 22" stroke="#262a30" strokeWidth="4" /><path d="M3 5l10 15M13 5L2 21" stroke="#f2f2f2" strokeWidth="2" /><text x="18" y="13" textAnchor="middle" fontSize="12" fontWeight="bold" fill="#a3283c">5</text></>],
  ["Capture", false, <><circle cx="12" cy="12" r="11" fill="#e7f1fa" /><circle cx="12" cy="12" r="9.500" fill="#4b97d8" /><circle cx="12" cy="12" r="5" fill="#07121d" stroke="#d5ecff" strokeWidth="1.500" /><path d="M12 2q6 1 7 7M22 13q-3 6-8 6M11 22Q5 19 5 13M2 11q2-6 8-7" fill="none" stroke="#e7f4ff" strokeWidth="1.500" /></>],
  ["Camtasia", true, <><path d="M1 1h22v22H1z" fill="#58962d" /><path d="M1 1h22L1 23z" fill="#79b549" /><path d="M17 6H8v12h10" fill="none" stroke="#fff" strokeWidth="3" /></>],
  ["Cura", false, <><circle cx="12" cy="12" r="10" fill="#17222e" stroke="#f3f3f3" strokeWidth="2.500" /><path d="M6 10l11-3M5 14l14-4M7 18l11-4" fill="none" stroke="#fff" strokeWidth="2.200" /></>],
  ["Modeler", false, <><path d="M16 1L3 12l9 11 3-4-5-7 7-7z" fill="#a12f58" /><path d="M13 12l8-5-2 6 2 5z" fill="#c1507a" /><path d="M16 1l2 4-8 7z" fill="#741b3d" /></>],
  ["Recorder", true, <><path d="M1 1h22v22H1z" fill="#fdfdfd" /><path d="M18 6H8v11h10" fill="none" stroke="#4e9228" strokeWidth="3.500" /><path d="M6 19l12-1 3 3H9z" fill="#7d8d73" /></>],
];

function TaskBar() {
  return (
    <nav className="flex h-[22px] items-center border-t border-[#5c6f80] bg-linear-to-r from-[#0e2236] via-[#234465] to-[#132a43] text-white">
      <button type="button" aria-label="Start" className="flex w-[33px] shrink-0 justify-center">
        <svg viewBox="0 0 24 24" className="h-[21px] w-[21px]">
          <circle cx="12" cy="12" r="11.500" fill="#4b7b9c" stroke="#a9c6d8" />
          <path d="M1 12a11 11 0 0122 0q-11-5-22 0z" fill="#9ebccc" />
          <path d="M6 7q3-2 5 0v5q-3-2-6 0z" fill="#ef6a35" />
          <path d="M12.500 7.500q3 1 6-1l-1 5.500q-3 1-5 0z" fill="#94c63d" />
          <path d="M5 13q3-2 6 0l-.5 5q-3-2-6 0z" fill="#48aae6" />
          <path d="M12.500 13.500q3 1 5.500 0l-1 5q-3 1-5 0z" fill="#fbd33b" />
        </svg>
      </button>
      <div className="grid h-full w-[546px] shrink-0 grid-cols-15">
        {apps.map(([label, open, art]) => (
          <button
            key={label}
            type="button"
            aria-label={label}
            className={`flex items-center justify-center ${open ? "border-x border-[#a4b3bf] bg-linear-to-b from-[#8c9daa] to-[#4e6679]" : ""}`}
          >
            <svg viewBox="0 0 24 24" className="h-[18px] w-[18px]">{art}</svg>
          </button>
        ))}
      </div>
      <div className="ml-auto flex items-center gap-[4px]">
        <span className="text-[7px] leading-[10px]">IN</span>
        <svg viewBox="0 0 16 16" className="h-[10px] w-[10px]"><circle cx="8" cy="8" r="7" fill="#2b40a8" stroke="#dfe6ff" strokeWidth="1.500" /><path d="M5.500 6q0-2.500 2.500-2.500T10.500 6 8 8.500V10M8 11.500v1.500" fill="none" stroke="#fff" strokeWidth="1.700" /></svg>
        <svg viewBox="0 0 8 16" className="h-[11px] w-[6px]"><path d="M2 1h5v4H1V3" fill="none" stroke="#fff" strokeWidth="1.300" /><path d="M2 11h4l-2 3z" fill="#fff" /></svg>
        <svg viewBox="0 0 8 5" className="mx-[3px] h-[3px] w-[5px]"><path d="M0 5h8L4 0z" fill="#fff" /></svg>
        <svg viewBox="0 0 16 16" className="ml-[2px] h-[10px] w-[10px]"><path d="M2 1v14M3 2h9v7H3z" fill="#fff" stroke="#fff" strokeWidth="1.500" /><circle cx="11" cy="11" r="4.500" fill="#cf2029" /><path d="M9 9l4 4M13 9l-4 4" stroke="#fff" strokeWidth="1.200" /></svg>
        <svg viewBox="0 0 16 16" className="h-[10px] w-[10px]"><path d="M2 2h8v12H2zM4 5h4M4 8h4M10 4v4h4V4M12 8v4q0 2-3 2" fill="none" stroke="#f3f3f3" strokeWidth="1.600" /></svg>
        <svg viewBox="0 0 16 16" className="h-[10px] w-[10px]"><path d="M1 15v-3h2v3zM5 15v-6h2v6zM9 15V5h2v10zM13 15V1h2v14z" fill="#fff" /><path d="M9 7l5 8H4z" fill="#f1c232" stroke="#8a6d00" strokeWidth=".5" /></svg>
        <svg viewBox="0 0 16 16" className="h-[10px] w-[10px]"><path d="M1 6h3l5-5v14l-5-5H1z" fill="#eee" /><circle cx="11" cy="11" r="4" fill="#fff" stroke="#d42027" strokeWidth="1.700" /><path d="M8.500 13.500l5-5" stroke="#d42027" strokeWidth="1.700" /></svg>
      </div>
      <time className="ml-[6px] w-[40px] shrink-0 text-center text-[7px] leading-[10px]">
        11:48
        <br />
        02/11/2021
      </time>
      <button type="button" aria-label="Show desktop" className="ml-[3px] h-full w-[9px] border-l border-[#556779] bg-[#1d3348]" />
    </nav>
  );
}

export default function App() {
  return (
    <div className="flex h-screen flex-col overflow-hidden bg-[#f0f0f0] font-['Open_Sans','Noto_Sans',sans-serif] text-[#222]">
      <TitleBar />
      <div className="flex min-h-0 flex-1 flex-col border-x border-[#2b3036]">
        <ul className="flex h-[14px] items-center border-t border-white bg-linear-to-b from-[#f4f6fb] to-[#d6daec] pl-[4px]">
          {menus.map(([label, width]) => (
            <li key={label} className={`shrink-0 text-[7px] leading-[12px] whitespace-nowrap ${width}`}>
              <button type="button">{label}</button>
            </li>
          ))}
        </ul>
        <div className="bg-[#d5d8ea]">
          <div className="flex h-[17px]">
            <Group className="w-[94px] pr-[6px]" items="file open save print preview cup" />
            <Group className="w-[36px] pr-[3px]" items="undo redo" />
            <Group className="w-[157px] pr-[2px]" items="pan fit | zoomWin zoomFit zoomIn | zoomHalf zoomOut | brush brushUp brushX" />
            <Group className="w-[63px] pr-[3px]" items="cubeTop cubeLeft cubeRight cubeIso" />
            <Group className="w-[31px] pr-px" items="table v" />
            <Group className="w-[80px] pr-[3px]" items="globe v sphere v redBox redWire" />
            <Group className="w-[71px] pr-px" items="pencil pencils v | wand v" />
            <Group className="w-[104px] pr-px" items="ask grid6 | join flame sigma loop v" />
          </div>
          <div className="flex h-[18px]">
            <Group className="w-[163px] pr-px" items="plus v line v circle v rect v fillet v spline v drum v" />
            <Group className="w-[46px] pr-px" items="trim axis v" />
            <Group className="w-[165px] pr-px" items="xfMove xfRotate xfCopy xfMirror xfScale xfOffset xfProject | nest v quad dragBox v" />
            <Group className="w-[45px] pr-[2px]" items="bulb v dim" />
          </div>
          <YellowBar />
        </div>
        <div className="h-[18px] border-b border-[#9a9a9a] bg-[#f0f0f0] pl-[109px] font-['Roboto','Liberation_Sans',sans-serif] text-[7px] leading-[17px]">Ribbon Bar</div>
        <div className="flex min-h-0 flex-1">
          <LeftDock />
          <OperationsManager />
          <Viewport />
          <RightDock />
        </div>
        <StatusBar />
      </div>
      <TaskBar />
    </div>
  );
}
